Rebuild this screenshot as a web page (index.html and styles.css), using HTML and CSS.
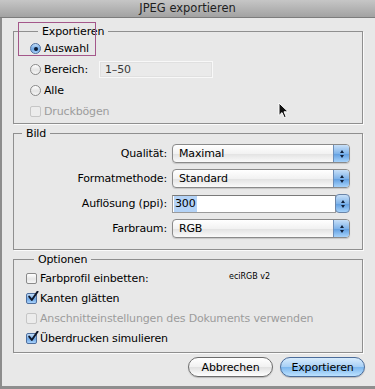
FILE: index.html
```
<!DOCTYPE html>
<html lang="de">
<head>
    <meta charset="utf-8">
    <meta name="viewport" content="width=device-width, initial-scale=1.0">
    <title>JPEG exportieren</title>
    <link rel="stylesheet" href="styles.css">
</head>
<body>
    <div class="window">
        <div class="titlebar">JPEG exportieren</div>
        <div class="panel">
            <fieldset class="group group-export">
                <legend>Exportieren</legend>
                <div class="row">
                    <span class="radio checked"></span>
                    <span>Auswahl</span>
                </div>
                <div class="row">
                    <span class="radio"></span>
                    <span class="range-label">Bereich:</span>
                    <span class="textfield">1–50</span>
                </div>
                <div class="row">
                    <span class="radio"></span>
                    <span>Alle</span>
                </div>
                <div class="row disabled">
                    <span class="checkbox"></span>
                    <span>Druckbögen</span>
                </div>
            </fieldset>

            <fieldset class="group group-image">
                <legend>Bild</legend>
                <div class="form-grid">
                    <label class="field-label">Qualität:</label>
                    <div class="popup">
                        <span class="popup-value">Maximal</span>
                        <span class="popup-arrows"><span class="up"></span><span class="down"></span></span>
                    </div>

                    <label class="field-label">Formatmethode:</label>
                    <div class="popup">
                        <span class="popup-value">Standard</span>
                        <span class="popup-arrows"><span class="up"></span><span class="down"></span></span>
                    </div>

                    <label class="field-label">Auflösung (ppi):</label>
                    <div class="combo">
                        <span class="combo-field"><span class="selected-text">300</span></span>
                        <span class="popup-arrows stepper"><span class="up"></span><span class="down"></span></span>
                    </div>

                    <label class="field-label">Farbraum:</label>
                    <div class="popup">
                        <span class="popup-value">RGB</span>
                        <span class="popup-arrows"><span class="up"></span><span class="down"></span></span>
                    </div>
                </div>
            </fieldset>

            <fieldset class="group group-options">
                <legend>Optionen</legend>
                <div class="row">
                    <span class="checkbox"></span>
                    <span class="profile-label">Farbprofil einbetten:</span>
                    <span class="profile-name">eciRGB v2</span>
                </div>
                <div class="row">
                    <span class="checkbox checked">
                        <svg viewBox="0 0 12 12" width="12" height="12"><path d="M2.2 5.6 L4.8 9 L10.6 0.6" fill="none" stroke="#10182a" stroke-width="1.9" stroke-linecap="round" stroke-linejoin="round"/></svg>
                    </span>
                    <span>Kanten glätten</span>
                </div>
                <div class="row disabled">
                    <span class="checkbox"></span>
                    <span>Anschnitteinstellungen des Dokuments verwenden</span>
                </div>
                <div class="row">
                    <span class="checkbox checked">
                        <svg viewBox="0 0 12 12" width="12" height="12"><path d="M2.2 5.6 L4.8 9 L10.6 0.6" fill="none" stroke="#10182a" stroke-width="1.9" stroke-linecap="round" stroke-linejoin="round"/></svg>
                    </span>
                    <span>Überdrucken simulieren</span>
                </div>
            </fieldset>

            <div class="actions">
                <button class="btn">Abbrechen</button>
                <button class="btn default">Exportieren</button>
            </div>
        </div>

        <!-- annotation frame and mouse pointer lying over the dialog -->
        <div class="highlight"></div>
        <svg class="cursor" viewBox="0 0 12 17" width="12" height="17">
            <path d="M1 1 L1 13.5 L4 10.6 L6.2 15.6 L8.2 14.7 L6 9.8 L10.2 9.8 Z" fill="#111" stroke="#fff" stroke-width="1" stroke-linejoin="round"/>
        </svg>
    </div>
</body>
</html>
```

FILE: styles.css
```
* {
    margin: 0;
    padding: 0;
    box-sizing: border-box;
}

body {
    width: 375px;
    height: 389px;
    overflow: hidden;
    font-family: 'DejaVu Sans', 'Liberation Sans', sans-serif;
    font-size: 11px;
    letter-spacing: -0.15px;
    color: #000000;
    background-color: #e8e8e8;
}

.window {
    position: relative;
    width: 375px;
    height: 389px;
}

.titlebar {
    height: 18px;
    line-height: 17px;
    text-align: center;
    font-size: 11.5px;
    letter-spacing: 0;
    color: #1e1e1e;
    background: linear-gradient(#c6c6c6, #a2a2a2);
    border-bottom: 1px solid #7c7c7c;
}

.panel {
    height: 371px;
    padding: 8px 12px 0 11px;
    border-left: 2px solid #8c8c8c;
    border-bottom: 3px solid #8e8e8e;
    background-color: #e8e8e8;
}

/* Group boxes */
.group {
    border: 1px solid #8f8f8f;
    min-width: 0;
    box-shadow: 1px 1px 0 rgba(255, 255, 255, 0.8);
}

.group legend {
    margin-left: 8px;
    padding: 1px 4px 0;
    line-height: 12px;
}

.group + .group {
    margin-top: 3px;
}

.group-export {
    padding: 0 0 1px 16px;
}

.group-image {
    padding: 4px 12px 11px 0;
}

.group-options {
    padding: 2px 0 4px 12px;
}

.row {
    display: flex;
    align-items: center;
    height: 21px;
}

.group-export {
    margin-top: -1px;
}

.group-options .row {
    height: 20px;
}

.disabled {
    color: #9c9c9c;
}

/* Radio buttons and checkboxes */
.radio {
    width: 11px;
    height: 11px;
    margin-right: 3px;
    border-radius: 50%;
    border: 1px solid #8a8a8a;
    background: linear-gradient(#ffffff, #e4e4e4 55%, #f6f6f6);
    flex-shrink: 0;
    display: flex;
    justify-content: center;
    align-items: center;
}

.radio.checked {
    border-color: #4f6f9e;
    background: linear-gradient(#c3def8, #6fa8e6 55%, #a8d2fb);
}

.radio.checked::after {
    content: '';
    width: 4px;
    height: 4px;
    border-radius: 50%;
    background-color: #0e1c33;
}

.checkbox {
    position: relative;
    width: 11px;
    height: 11px;
    margin-right: 3px;
    border-radius: 2px;
    border: 1px solid #8a8a8a;
    background: linear-gradient(#ffffff, #e6e6e6 55%, #f6f6f6);
    flex-shrink: 0;
}

.checkbox.checked {
    border-color: #4f6f9e;
    background: linear-gradient(#c3def8, #6fa8e6 55%, #a8d2fb);
}

.checkbox svg {
    position: absolute;
    left: 0;
    top: -3px;
}

.disabled .checkbox {
    border-color: #c6c6c6;
    background: #ececec;
}

.range-label {
    width: 55px;
}

.textfield {
    width: 114px;
    height: 17px;
    line-height: 15px;
    padding-left: 5px;
    color: #3a3a3a;
    background-color: #eaeaea;
    border: 1px solid #f8f8f8;
    box-shadow: inset 0 0 0 1px #e0e0e0;
}

/* Bild form */
.form-grid {
    display: grid;
    grid-template-columns: 153px 178px;
    column-gap: 5px;
    row-gap: 6px;
}

.field-label {
    height: 19px;
    line-height: 19px;
    text-align: right;
}

.popup {
    display: flex;
    height: 19px;
    border: 1px solid #8a8a8a;
    border-radius: 4px;
    background: linear-gradient(#ffffff, #f2f2f2 50%, #e2e2e2 52%, #fafafa);
    box-shadow: 0 1px 1px rgba(0, 0, 0, 0.15);
    overflow: hidden;
}

.popup-value {
    flex: 1;
    line-height: 17px;
    padding-left: 6px;
}

.popup-arrows {
    width: 16px;
    display: flex;
    flex-direction: column;
    justify-content: center;
    align-items: center;
    gap: 2px;
    border-left: 1px solid #6b8db8;
    background: linear-gradient(#c8e0f8, #80b4ea 50%, #5f9de0 52%, #a7d3fb);
}

.popup-arrows .up {
    width: 0;
    height: 0;
    border-left: 2.5px solid transparent;
    border-right: 2.5px solid transparent;
    border-bottom: 3px solid #10203a;
}

.popup-arrows .down {
    width: 0;
    height: 0;
    border-left: 2.5px solid transparent;
    border-right: 2.5px solid transparent;
    border-top: 3px solid #10203a;
}

.combo {
    display: flex;
    height: 19px;
}

.combo-field {
    flex: 1;
    height: 18px;
    margin-top: 1px;
    padding-left: 1px;
    line-height: 16px;
    background-color: #ffffff;
    border: 1px solid #9a9a9a;
    border-top-color: #7a7a7a;
}

.selected-text {
    display: inline-block;
    padding: 0 1px;
    background-color: #b4d3f7;
}

.stepper {
    width: 15px;
    margin-left: -1px;
    border: 1px solid #6b85a8;
    border-radius: 4px;
}

/* Optionen */
.profile-label {
    width: 189px;
}

.profile-name {
    align-self: flex-start;
    margin-top: 4px;
    font-size: 8px;
    letter-spacing: 0;
}

/* Buttons */
.actions {
    display: flex;
    justify-content: flex-end;
    gap: 7px;
    margin-top: 4px;
    margin-right: -2px;
}

.btn {
    width: 85px;
    height: 20px;
    border-radius: 10px;
    border: 1px solid #6c6c6c;
    font-family: inherit;
    font-size: 11px;
    letter-spacing: -0.15px;
    color: #000000;
    background: linear-gradient(#ffffff, #f1f1f1 50%, #e1e1e1 52%, #ffffff);
    box-shadow: 0 1px 1px rgba(0, 0, 0, 0.2);
}

.btn.default {
    border-color: #4b6c9a;
    background: linear-gradient(#d8ecfd, #a7cff5 50%, #7db7ee 52%, #bde2ff);
}

/* Overlays */
.highlight {
    position: absolute;
    left: 18px;
    top: 22px;
    width: 78px;
    height: 34px;
    border: 1px solid #a4578a;
}

.cursor {
    position: absolute;
    left: 278px;
    top: 102px;
}
```
